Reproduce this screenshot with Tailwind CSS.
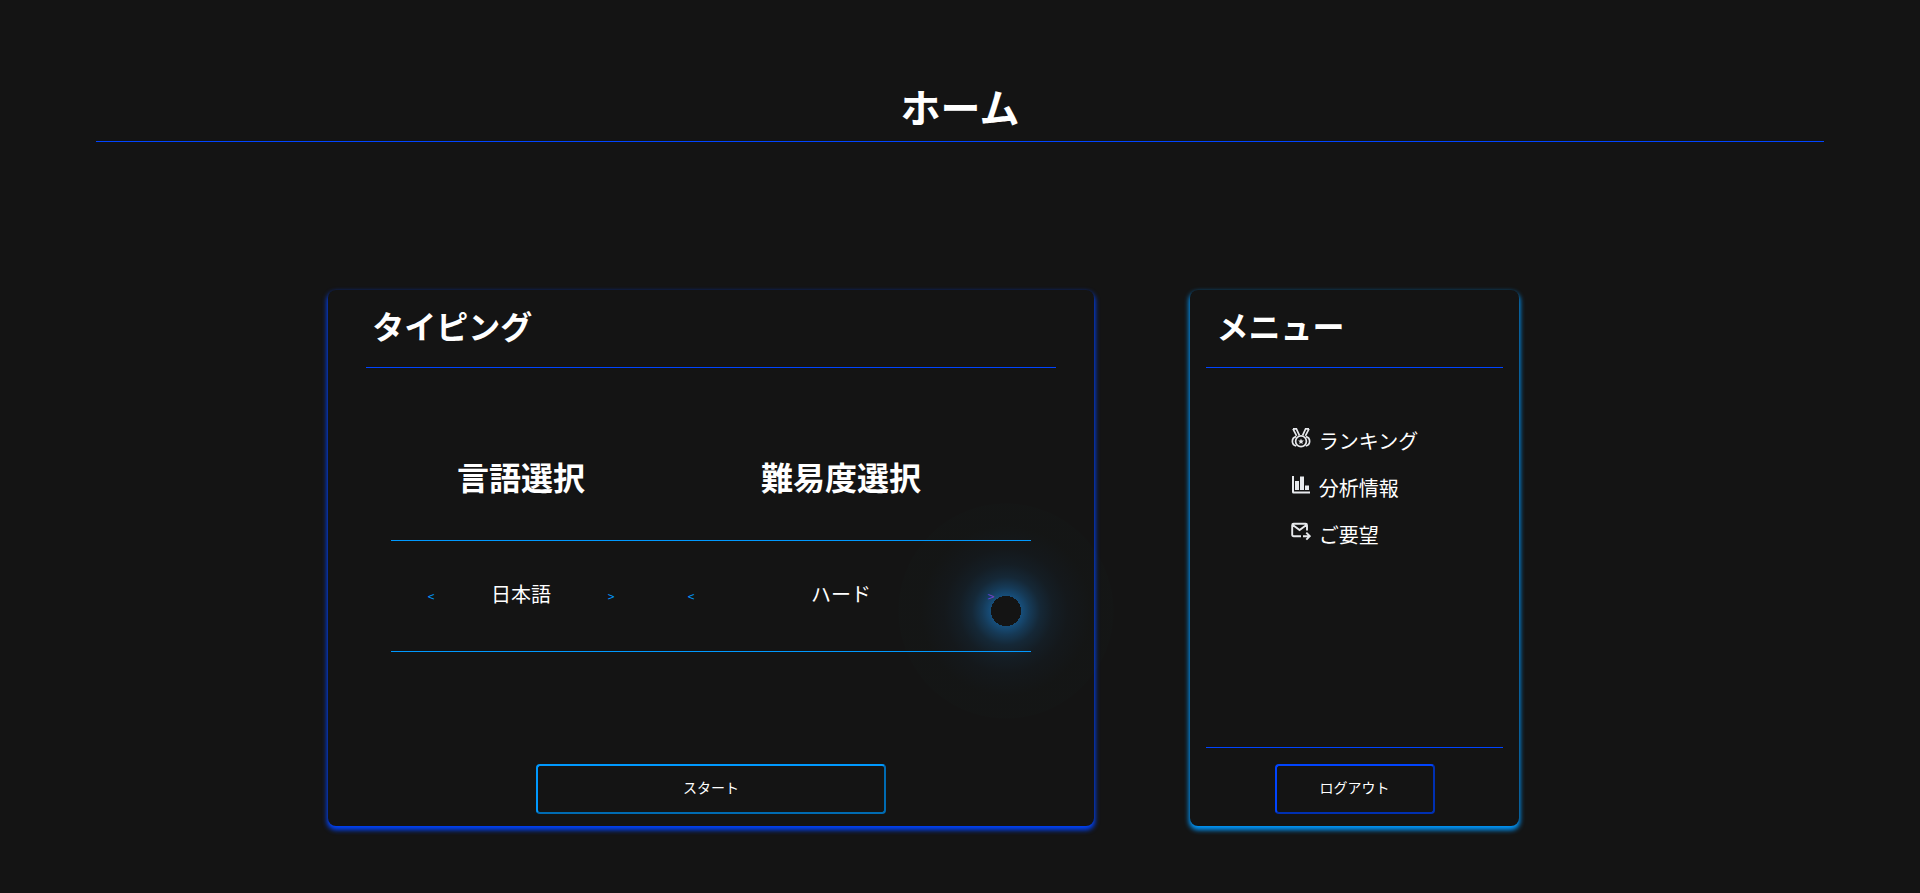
<!DOCTYPE html>
<html lang="ja">
<head>
<meta charset="utf-8">
<title>ホーム</title>
<script src="https://cdn.jsdelivr.net/npm/@tailwindcss/browser@4"></script>
</head>
<body class="min-h-screen bg-[#141414] text-white font-['Noto_Sans_CJK_JP',sans-serif] overflow-x-hidden">
<header class="mx-[5%] pt-[76px] pb-[5px] border-b border-[#0044ff]">
  <h1 class="text-center text-[40px] leading-[60px] font-bold">ホーム</h1>
</header>
<main class="flex gap-24 mt-[148px] pl-[328px] pr-[401px]">
  <section class="relative flex-1 h-[536px] rounded-lg shadow-[0_3px_5px_1px_#0044ff] bg-[#141414] flex flex-col items-center">
    <div class="w-[90%] border-b border-[#0044ff] h-[78px]">
      <h2 class="pl-1.5 pt-[11px] text-[32px] leading-[48px] font-bold">タイピング</h2>
    </div>
    <div class="w-[640px] grid grid-cols-[260px_1fr] text-center mt-[84px] pb-10 border-b border-[#0099ff]">
      <h3 class="text-[32px] leading-[48px] font-bold">言語選択</h3>
      <h3 class="text-[32px] leading-[48px] font-bold">難易度選択</h3>
    </div>
    <div class="w-[640px] h-[111px] flex border-b border-[#0099ff]">
      <div class="w-[260px] px-8 flex items-center justify-between">
        <button class="w-4 text-xs text-[#0099ff]" aria-label="前の言語">&lt;</button>
        <span class="text-xl pb-1">日本語</span>
        <button class="w-4 text-xs text-[#0099ff]" aria-label="次の言語">&gt;</button>
      </div>
      <div class="flex-1 px-8 flex items-center justify-between">
        <button class="w-4 text-xs text-[#0099ff]" aria-label="前の難易度">&lt;</button>
        <span class="text-xl pb-1">ハード</span>
        <button class="relative z-10 w-4 text-xs text-[#7344cc]" aria-label="次の難易度">&gt;</button>
      </div>
    </div>
    <button class="mt-auto mb-3 w-[350px] h-[50px] pb-1 rounded-sm border-2 border-t-[#0099ff] border-l-[#0099ff] border-r-[#006bb2] border-b-[#006bb2] text-sm">スタート</button>
    <!-- カーソルの光 -->
    <div class="absolute left-[568px] top-[211px] size-[220px] rounded-full pointer-events-none bg-[radial-gradient(circle,#141414_15px,#1a99ff70_15px,#1a99ff48_24px,#1a99ff26_34px,#1a99ff12_47px,#1a99ff08_62px,#1a998003_85px,#1a998003_107px,transparent_108px)]"></div>
  </section>
  <section class="w-[329px] h-[536px] rounded-lg shadow-[0_3px_5px_1px_#0099ff] bg-[#141414] flex flex-col items-center">
    <div class="w-[90%] border-b border-[#0044ff] h-[78px]">
      <h2 class="pl-2.5 pt-[11px] text-[32px] leading-[48px] font-bold">メニュー</h2>
    </div>
    <nav class="mt-[49px]">
      <a href="#" class="flex items-center gap-2 h-[47px] text-xl">
        <svg class="size-5 mb-1.5" viewBox="0 0 20 20" fill="none" stroke="#e8eaed" stroke-width="1.7">
          <path d="M2 .9h3.400l3 6.400M2 .9l3.600 7M18 .9h-3.400l-3 6.400M18 .9l-3.600 7"/>
          <circle cx="10" cy="13.300" r="5.400"/>
          <path d="M5.200 8.600A4.800 4.800 0 0 0 5.200 18M14.800 8.600a4.800 4.800 0 0 1 0 9.400"/>
          <path fill="#e8eaed" stroke="none" d="M10 10.500l.8 1.900 2.100.2-1.600 1.400.5 2.100-1.800-1.100-1.800 1.100.5-2.100-1.600-1.400 2.100-.2z"/>
        </svg>
        ランキング
      </a>
      <a href="#" class="flex items-center gap-2 h-[47px] text-xl">
        <svg class="size-5 mb-1.5" viewBox="0 0 20 20" fill="#e8eaed">
          <path d="M1 1h2v15.500h16v2H2.500Q1 18.500 1 17zM4 6h4v9H4zM9 1.500h4V15H9zM14 10.500h4V15h-4z"/>
        </svg>
        分析情報
      </a>
      <a href="#" class="flex items-center gap-2 h-[47px] text-xl">
        <svg class="size-5 mb-2" viewBox="0 0 20 20" fill="none" stroke="#e8eaed" stroke-width="1.9">
          <path d="M10 15.200H2.600Q1.200 15.200 1.200 13.800V4.200Q1.200 2.800 2.600 2.800H14.600Q16 2.800 16 4.200V9.500M1.800 4L8.600 9 15.400 4M12 15.200h6.500M15.300 11.700l3.500 3.500-3.500 3.500"/>
        </svg>
        ご要望
      </a>
    </nav>
    <div class="mt-auto w-[90%] pt-4 pb-3 border-t border-[#0044ff] flex justify-center">
      <button class="w-40 h-[50px] pb-1 rounded-sm border-2 border-t-[#0044ff] border-l-[#0044ff] border-r-[#0030b2] border-b-[#0030b2] text-sm">ログアウト</button>
    </div>
  </section>
</main>
</body>
</html>
